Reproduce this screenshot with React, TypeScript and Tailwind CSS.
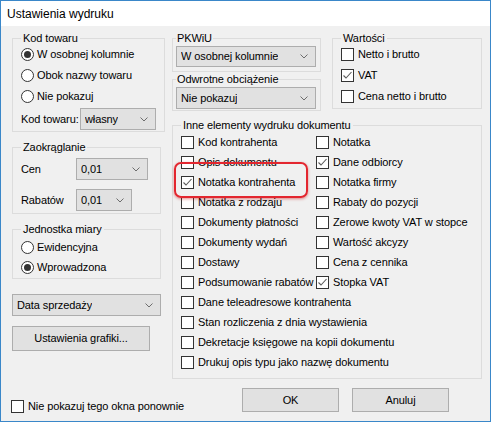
import React from "react"

function Chevron() {
  return (
    <svg width="8" height="5" viewBox="0 0 8 5" className="shrink-0">
      <path d="M0.5 0.5 L4 4 L7.5 0.5" fill="none" stroke="#6d6d6d" strokeWidth="1" />
    </svg>
  )
}

function Select({ value, className = "" }: { value: string; className?: string }) {
  return (
    <div
      className={`flex items-center justify-between border border-[#adadad] bg-[#e1e1e1] pl-[4px] pr-[7px] ${className}`}
    >
      <span className="truncate">{value}</span>
      <Chevron />
    </div>
  )
}

function Radio({ checked = false, label }: { checked?: boolean; label: string }) {
  return (
    <div className="flex items-center gap-[3px] whitespace-nowrap">
      <span className="flex h-[13px] w-[13px] shrink-0 items-center justify-center rounded-full border border-[#333333] bg-white">
        {checked && <span className="h-[7px] w-[7px] rounded-full bg-[#333333]" />}
      </span>
      <span>{label}</span>
    </div>
  )
}

function Check({ checked = false, label }: { checked?: boolean; label: string }) {
  return (
    <div className="flex items-center gap-[4px] whitespace-nowrap">
      <span className="flex h-[13px] w-[13px] shrink-0 items-center justify-center border border-[#333333] bg-white">
        {checked && (
          <svg width="11" height="11" viewBox="0 0 11 11">
            <path d="M1.5 5.5 L4 8 L9.5 2" fill="none" stroke="#5c5c5c" strokeWidth="1.1" />
          </svg>
        )}
      </span>
      <span>{label}</span>
    </div>
  )
}

function Group({
  label,
  className = "",
  pad = "pl-[8px] pr-[8px]",
  legendPad = "px-[2px]",
  children,
}: {
  label: string
  className?: string
  pad?: string
  legendPad?: string
  children?: React.ReactNode
}) {
  return (
    <fieldset className={`border border-[#dcdcdc] ${pad} ${className}`}>
      <legend className={`${legendPad} leading-[14px]`}>{label}</legend>
      {children}
    </fieldset>
  )
}

function Button({ label, className = "" }: { label: string; className?: string }) {
  return (
    <div className={`flex items-center justify-center border border-[#adadad] bg-[#e1e1e1] ${className}`}>
      {label}
    </div>
  )
}

const inneLeft = [
  { label: "Kod kontrahenta" },
  { label: "Opis dokumentu" },
  { label: "Notatka kontrahenta", checked: true },
  { label: "Notatka z rodzaju" },
  { label: "Dokumenty płatności" },
  { label: "Dokumenty wydań" },
  { label: "Dostawy" },
  { label: "Podsumowanie rabatów" },
]

const inneRight = [
  { label: "Notatka" },
  { label: "Dane odbiorcy", checked: true },
  { label: "Notatka firmy" },
  { label: "Rabaty do pozycji" },
  { label: "Zerowe kwoty VAT w stopce" },
  { label: "Wartość akcyzy" },
  { label: "Cena z cennika" },
  { label: "Stopka VAT", checked: true },
]

const inneWide = [
  "Dane teleadresowe kontrahenta",
  "Stan rozliczenia z dnia wystawienia",
  "Dekretacje księgowe na kopii dokumentu",
  "Drukuj opis typu jako nazwę dokumentu",
]

export default function App() {
  return (
    <div className="flex h-[422px] w-[491px] flex-col border border-[#3a87c9] font-['Liberation_Sans',Arial,sans-serif] text-[11px] tracking-[-0.1px] text-black">
      <div className="flex h-[25px] shrink-0 items-center bg-white pl-[6px] text-[12px] tracking-normal">
        Ustawienia wydruku
      </div>

      <div className="flex flex-1 gap-[11px] bg-[#f0f0f0] pl-[11px] pt-[5px]">
        {/* lewa kolumna */}
        <div className="flex w-[149px] flex-col">
          <Group label="Kod towaru" className="h-[101px]">
            <div className="-mt-[1px] flex flex-col">
              <div className="flex h-[21px] items-center">
                <Radio checked label="W osobnej kolumnie" />
              </div>
              <div className="flex h-[21px] items-center">
                <Radio label="Obok nazwy towaru" />
              </div>
              <div className="flex h-[21px] items-center">
                <Radio label="Nie pokazuj" />
              </div>
            </div>
            <div className="mt-[1px] flex items-center">
              <span className="w-[59px] shrink-0 whitespace-nowrap">Kod towaru:</span>
              <Select value="własny" className="h-[22px] w-[76px]" />
            </div>
          </Group>

          <Group label="Zaokrąglanie" className="mt-[8px] h-[74px]">
            <div className="mt-[4px] flex items-center">
              <span className="w-[55px] shrink-0">Cen</span>
              <Select value="0,01" className="h-[22px] w-[72px]" />
            </div>
            <div className="mt-[9px] flex items-center">
              <span className="w-[55px] shrink-0">Rabatów</span>
              <Select value="0,01" className="h-[22px] w-[56px]" />
            </div>
          </Group>

          <Group label="Jednostka miary" className="mt-[8px] h-[57px]">
            <div className="mt-[1px] flex flex-col">
              <div className="flex h-[20px] items-center">
                <Radio label="Ewidencyjna" />
              </div>
              <div className="flex h-[20px] items-center">
                <Radio checked label="Wprowadzona" />
              </div>
            </div>
          </Group>

          <Select value="Data sprzedaży" className="mt-[15px] h-[22px] w-[149px]" />
          <Button label="Ustawienia grafiki..." className="mt-[10px] h-[25px] w-[138px]" />

          <div className="-ml-[1px] mb-[8px] mt-auto flex h-[14px] items-center">
            <Check label="Nie pokazuj tego okna ponownie" />
          </div>
        </div>

        {/* prawa część */}
        <div className="flex w-[310px] flex-col">
          <div className="flex gap-[11px]">
            <div className="flex w-[149px] flex-col">
              <Group label="PKWiU" className="h-[41px]" pad="pl-[3px] pr-[4px]" legendPad="px-[1px]">
                <Select value="W osobnej kolumnie" className="mt-[1px] h-[21px] w-full" />
              </Group>
              <Group label="Odwrotne obciążenie" className="h-[39px]" pad="pl-[3px] pr-[4px]" legendPad="px-[1px]">
                <Select value="Nie pokazuj" className="mt-[1px] h-[22px] w-full" />
              </Group>
            </div>
            <Group label="Wartości" className="h-[78px] w-[150px]">
              <div className="-mt-[1px] flex flex-col">
                <div className="flex h-[21px] items-center">
                  <Check label="Netto i brutto" />
                </div>
                <div className="flex h-[21px] items-center">
                  <Check checked label="VAT" />
                </div>
                <div className="flex h-[21px] items-center">
                  <Check label="Cena netto i brutto" />
                </div>
              </div>
            </Group>
          </div>

          <Group label="Inne elementy wydruku dokumentu" className="mt-[7px] h-[261px]">
            <div className="relative">
              <div className="grid grid-cols-[135px_1fr]">
                {inneLeft.map((item, i) => (
                  <React.Fragment key={item.label}>
                    <div className="flex h-[20px] items-center">
                      <Check label={item.label} checked={item.checked} />
                    </div>
                    <div className="flex h-[20px] items-center">
                      <Check label={inneRight[i].label} checked={inneRight[i].checked} />
                    </div>
                  </React.Fragment>
                ))}
              </div>
              {inneWide.map((label) => (
                <div key={label} className="flex h-[20px] items-center">
                  <Check label={label} />
                </div>
              ))}
              <div className="absolute left-[-7px] top-[30px] h-[36px] w-[134px] rounded-[7px] border-2 border-[#e3262f] shadow-[0_1px_3px_rgba(200,0,0,0.45)]" />
            </div>
          </Group>

          <div className="mt-[9px] flex gap-[13px] pl-[70px]">
            <Button label="OK" className="h-[24px] w-[97px]" />
            <Button label="Anuluj" className="h-[24px] w-[97px]" />
          </div>
        </div>
      </div>
    </div>
  )
}
